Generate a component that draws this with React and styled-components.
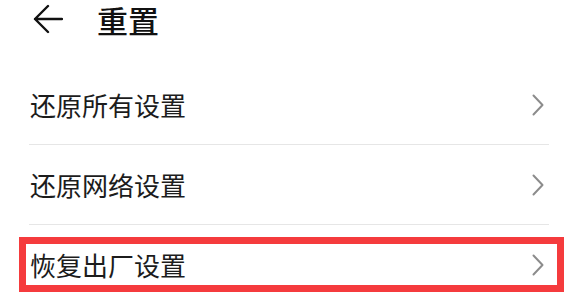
import React from 'react';
import styled, { createGlobalStyle } from 'styled-components';

const GlobalStyle = createGlobalStyle`
  html, body {
    margin: 0;
    padding: 0;
    background: #ffffff;
  }
  body {
    font-family: "Noto Sans CJK SC", "Noto Sans", sans-serif;
    color: #1a1a1a;
  }
`;

const Page = styled.div`
  width: 571px;
  height: 294px;
  overflow: hidden;
  background: #ffffff;
`;

const Header = styled.header`
  display: flex;
  align-items: center;
  height: 38px;
  padding-left: 33px;
  gap: 34px;
`;

const BackButton = styled.button`
  display: flex;
  align-items: center;
  justify-content: center;
  width: 30px;
  height: 30px;
  padding: 0;
  border: none;
  background: none;
  color: #111111;
`;

const Title = styled.h1`
  margin: 0;
  font-size: 31px;
  font-weight: 500;
  line-height: 1;
  color: #111111;
`;

const List = styled.ul`
  list-style: none;
  margin: 27px 22px 0 29px;
  padding: 0;
`;

const Row = styled.li`
  position: relative;
  display: flex;
  align-items: center;
  justify-content: space-between;
  height: 79px;
  padding: 0 5px 0 1px;
  border-bottom: 1px solid ${(p) => (p.$last ? 'transparent' : '#e6e6e6')};
`;

const Label = styled.span`
  font-size: 26px;
  line-height: 1;
  color: #1c1c1c;
`;

const Highlight = styled.div`
  position: absolute;
  top: 12px;
  left: -10px;
  right: -15px;
  height: 55px;
  box-sizing: border-box;
  border: 7px solid #f53b3d;
  pointer-events: none;
`;

function BackArrow() {
  return (
    <svg width="30" height="30" viewBox="0 0 30 30" fill="none">
      <path
        d="M29 15H2M15 2L2 15l13 13"
        stroke="currentColor"
        strokeWidth="2.4"
        strokeLinecap="round"
        strokeLinejoin="round"
      />
    </svg>
  );
}

function Chevron() {
  return (
    <svg width="12" height="22" viewBox="0 0 12 22" fill="none">
      <path
        d="M1.5 1.5l9 9.5-9 9.5"
        stroke="#8c8c8c"
        strokeWidth="2"
        strokeLinecap="round"
        strokeLinejoin="round"
      />
    </svg>
  );
}

const items = [
  { label: '还原所有设置' },
  { label: '还原网络设置' },
  { label: '恢复出厂设置', marked: true },
];

export default function App() {
  return (
    <Page>
      <GlobalStyle />
      <Header>
        <BackButton aria-label="返回">
          <BackArrow />
        </BackButton>
        <Title>重置</Title>
      </Header>
      <List>
        {items.map((item, i) => (
          <Row key={item.label} $last={i === items.length - 1}>
            <Label>{item.label}</Label>
            <Chevron />
            {item.marked && <Highlight />}
          </Row>
        ))}
      </List>
    </Page>
  );
}
